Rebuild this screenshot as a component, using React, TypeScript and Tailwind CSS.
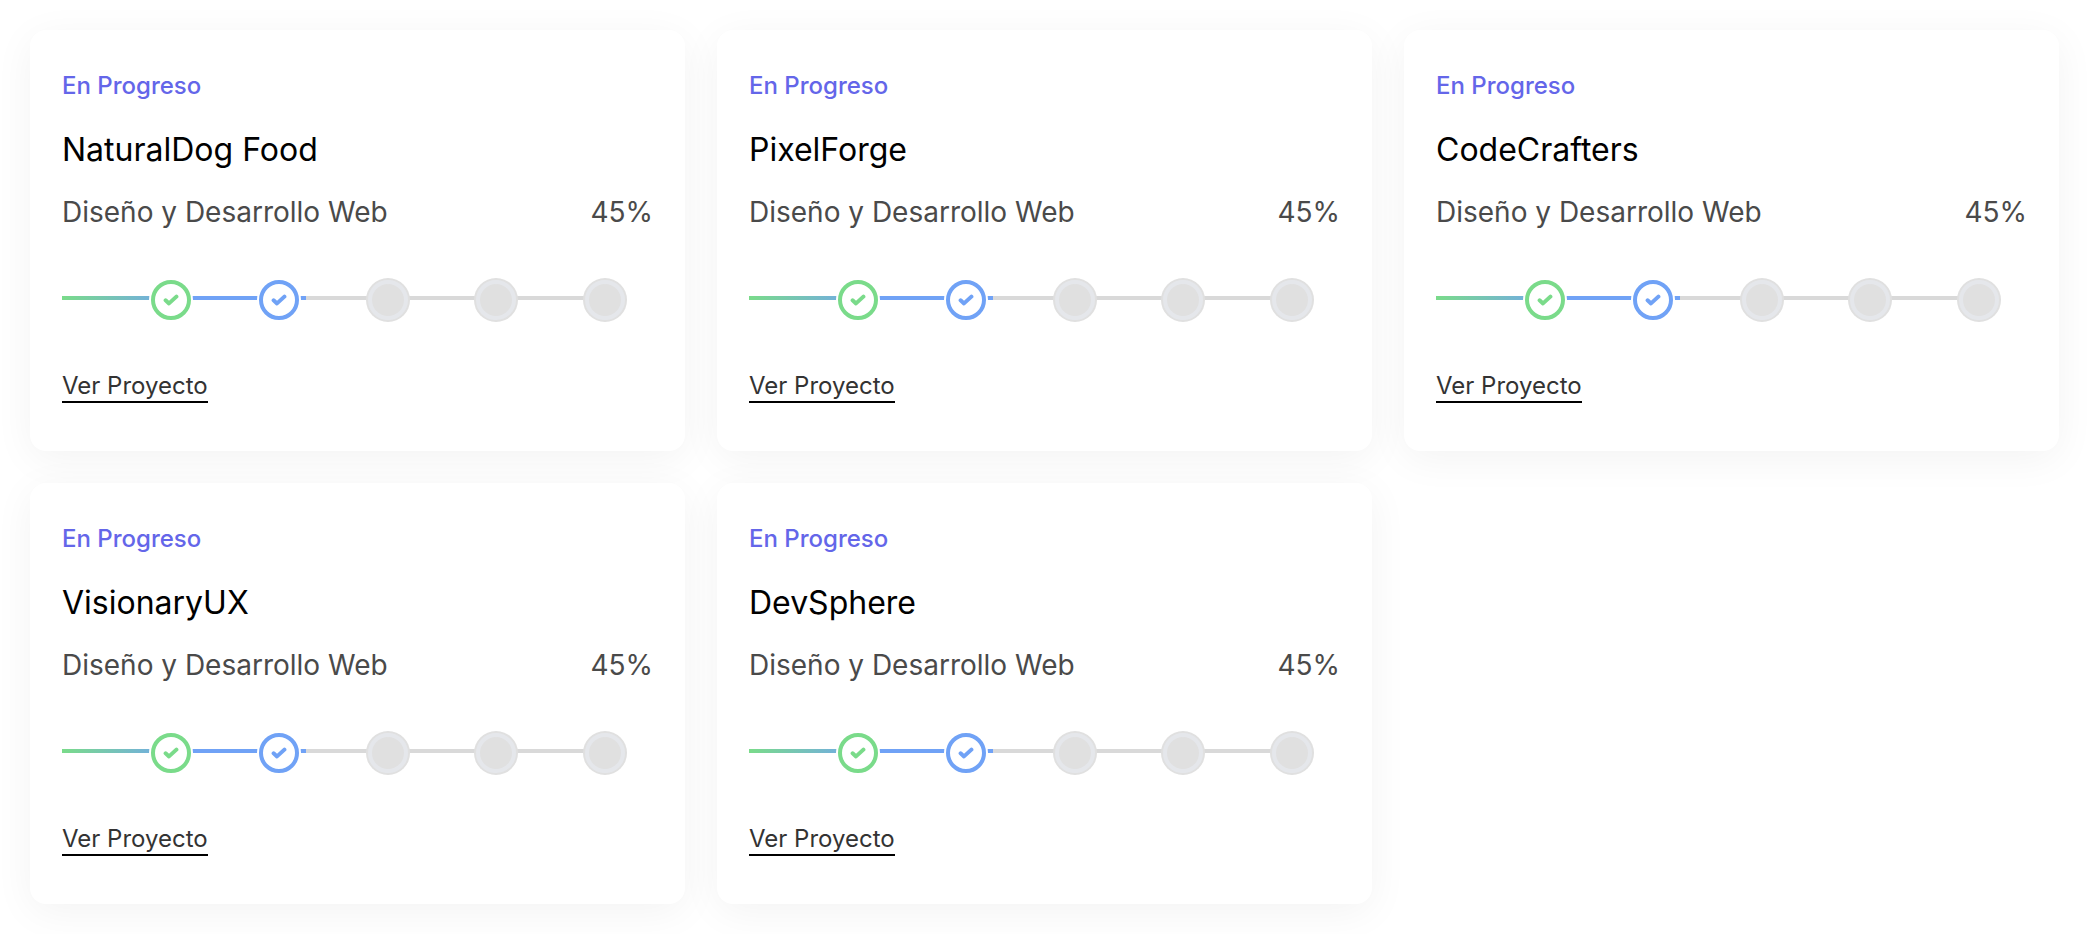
type StepState = "done" | "current" | "pending";

interface Project {
  name: string;
  service: string;
  progress: number;
}

const projects: Project[] = [
  { name: "NaturalDog Food", service: "Diseño y Desarrollo Web", progress: 45 },
  { name: "PixelForge", service: "Diseño y Desarrollo Web", progress: 45 },
  { name: "CodeCrafters", service: "Diseño y Desarrollo Web", progress: 45 },
  { name: "VisionaryUX", service: "Diseño y Desarrollo Web", progress: 45 },
  { name: "DevSphere", service: "Diseño y Desarrollo Web", progress: 45 },
];

const steps: StepState[] = ["done", "current", "pending", "pending", "pending"];

const stepStyles: Record<StepState, string> = {
  done: "border-[#7adb8a] bg-white text-[#7adb8a] ring-white",
  current: "border-[#70a2f6] bg-white text-[#70a2f6] ring-white",
  pending: "border-[#e5e7eb] bg-[#e0e0e0] ring-[#e0e0e0]",
};

function Step({ state }: { state: StepState }) {
  return (
    <li className="flex flex-1 justify-end">
      <span
        className={`-mr-5 flex size-10 shrink-0 items-center justify-center rounded-full border-4 ring-2 ${stepStyles[state]}`}
      >
        {state !== "pending" && (
          <svg viewBox="0 0 16 12" className="h-3 w-4" fill="none" stroke="currentColor" strokeWidth="4" strokeLinecap="round" strokeLinejoin="round">
            <path d="M2.6 6.3 L6 9.4 L13.4 2.6" />
          </svg>
        )}
      </span>
    </li>
  );
}

function ProgressTrack({ value }: { value: number }) {
  return (
    <div className="relative mr-12 py-[2px]">
      <div className="absolute inset-x-0 top-[18px] h-1 bg-[#d9d9d9]">
        <div
          className="h-full bg-linear-to-r/srgb from-[#7adb8a] to-[#70a2f6] to-50%"
          style={{ width: `${value}%` }}
        />
      </div>
      <ol className="relative flex">
        {steps.map((state, i) => (
          <Step key={i} state={state} />
        ))}
      </ol>
    </div>
  );
}

function ProjectCard({ project }: { project: Project }) {
  return (
    <article className="rounded-2xl bg-white px-8 pt-10 pb-12 shadow-[0_8px_40px_rgba(0,0,0,0.05)]">
      <p className="text-2xl leading-8 font-medium text-[#6466e9]">En Progreso</p>
      <h2 className="mt-7 text-[32px] leading-10 text-black">{project.name}</h2>
      <div className="mt-6 flex items-center justify-between text-[28px] leading-9 text-[#4a4a4a]">
        <p>{project.service}</p>
        <p>{project.progress}%</p>
      </div>
      <div className="mt-12">
        <ProgressTrack value={project.progress} />
      </div>
      <a href="#" className="mt-[49px] inline-block border-b-2 border-black text-2xl leading-[30px] text-[#333333]">
        Ver Proyecto
      </a>
    </article>
  );
}

export default function App() {
  return (
    <main className="grid grid-cols-3 gap-8 bg-white py-[30px] pr-[31px] pl-[30px] font-['Inter','Liberation_Sans',sans-serif]">
      {projects.map((project) => (
        <ProjectCard key={project.name} project={project} />
      ))}
    </main>
  );
}
